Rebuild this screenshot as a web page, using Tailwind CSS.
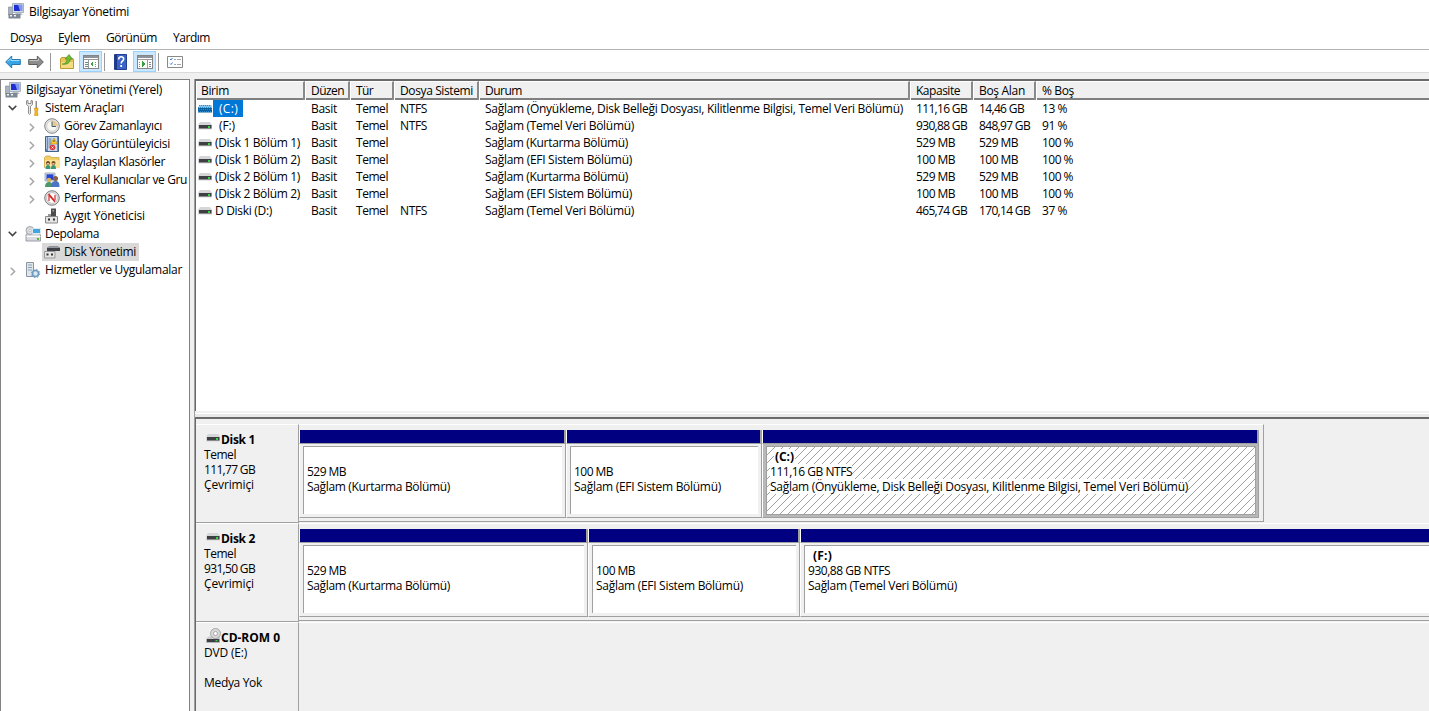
<!DOCTYPE html>
<html lang="tr">

<head>
    <meta charset="utf-8" />
    <meta name="viewport" content="width=device-width, initial-scale=1" />
    <title>Bilgisayar Yönetimi</title>
    <script src="https://cdn.jsdelivr.net/npm/@tailwindcss/browser@4"></script>
</head>

<body class="h-[711px] w-[1429px] overflow-hidden bg-white font-['Open_Sans','Noto_Sans',sans-serif] text-[12px] leading-[18px] text-black whitespace-nowrap">
    <!-- Icon sprites -->
    <svg class="hidden">
        <symbol id="computer" viewBox="0 0 16 16">
            <path d="M0.5 4h4v8h-4z" fill="#a9b4c0" stroke="#7b8793" stroke-width=".6" />
            <path d="M4.5 0.5h11v9h-11z" fill="#d5dce4" stroke="#8c98a5" stroke-width=".7" />
            <path d="M6 1.8h8.2v6.2H6z" fill="#1d2fd0" />
            <path d="M10 1.8h4.2v6.2h-2.2z" fill="#7f97f2" />
            <path d="M8 10h5l2 2H6z" fill="#b8c0c9" />
            <path d="M0.5 11h12v4.5H.5z" fill="#7d8895" />
            <path d="M2 12h2v1.5H2zM6 12h2v1.5H6z" fill="#f2f4f6" />
        </symbol>
        <symbol id="tools" viewBox="0 0 16 16">
            <path d="M1.500.8v3.700l2 1.800v7.200q1 2 2 0V6.300l2-1.800V.8L6 .5v3H3v-3z" fill="#e6e8ea" stroke="#777" stroke-width=".8" />
            <path d="M10.500 1h1.500v7h-1.500z" fill="#8b8b8b" />
            <path d="M9.500 8H13v2l-.6 1 .6 4.500H9.500l.6-4.500-.6-1z" fill="#f6b51e" stroke="#c88708" stroke-width=".5" />
        </symbol>
        <symbol id="clock" viewBox="0 0 16 16">
            <circle cx="8" cy="8" r="7.300" fill="#e7e7e5" stroke="#808488" />
            <circle cx="8" cy="8" r="5.300" fill="#f8f8f2" stroke="#b5babf" stroke-width=".6" />
            <path d="M8 2.700A5.300 5.300 0 0 1 13.300 8H8z" fill="#e8c98d" />
            <path d="M8 3.500V8.500h4" fill="none" stroke="#446078" />
        </symbol>
        <symbol id="events" viewBox="0 0 16 16">
            <path d="M1.500.5h13v15h-13z" fill="#628cc4" stroke="#446490" />
            <path d="M4 1h9v14H4z" fill="#c7dbf2" />
            <path d="M4.500 3h3M4.500 5h3M4.500 7h3M4.500 9h3M4.500 11h3" stroke="#4e6685" stroke-width=".8" />
            <path d="M2 2h1M2 4h1M2 6h1M2 8h1M2 10h1M2 12h1" stroke="#fff" />
            <path d="M10 2l3.500 6h-7z" fill="#ffcf27" stroke="#a87b10" stroke-width=".5" />
            <path d="M10 4v2" stroke="#222" stroke-width=".8" />
            <circle cx="8.500" cy="11.500" r="2.800" fill="#d93a3a" />
            <path d="M7.500 10.500l2 2M9.500 10.500l-2 2" stroke="#fff" stroke-width=".8" />
        </symbol>
        <symbol id="shared" viewBox="0 0 16 16">
            <path d="M.5 3.500L2 2h4l1 1.500h8v10H.5z" fill="#f1cf66" stroke="#c69c31" stroke-width=".7" />
            <path d="M1 6h14v8H1z" fill="#fae394" />
            <path d="M1.500 15c0-3 1-4 2.500-4s2.500 1 2.500 4zM7 15c0-3 1-4 2.500-4s2.500 1 2.500 4z" fill="#39967c" />
            <circle cx="4" cy="9" r="2" fill="#6c4728" />
            <circle cx="9.500" cy="9" r="2" fill="#7a4b25" />
            <path d="M3 9h2v1.500H3zM8.500 9h2v1.500h-2z" fill="#efc59b" />
        </symbol>
        <symbol id="users" viewBox="0 0 16 16">
            <path d="M1 1h10v8H1z" fill="#d5dce4" stroke="#8c98a5" stroke-width=".7" />
            <path d="M2.500 2.300h7v5.500h-7z" fill="#2744d3" />
            <circle cx="5" cy="8" r="2.200" fill="#d9b45b" />
            <path d="M1 15c0-3.500 1.500-5 4-5s4 1.500 4 5z" fill="#4c986d" />
            <circle cx="11.500" cy="6.500" r="2.500" fill="#876043" />
            <path d="M7 15c0-4 1.500-6 4.500-6s4 2 4 6z" fill="#4a75c4" />
        </symbol>
        <symbol id="perf" viewBox="0 0 16 16">
            <circle cx="8" cy="8" r="7.300" fill="#dedede" stroke="#7d7d7d" />
            <circle cx="8" cy="8" r="5.300" fill="#fff" stroke="#aaa" stroke-width=".6" />
            <path d="M5 11V6M11 10V5" fill="none" stroke="#cf2b2b" stroke-width="1.200" />
            <path d="M4.500 4.200l6.500 7.500" stroke="#cf2b2b" stroke-width="1.800" />
        </symbol>
        <symbol id="device" viewBox="0 0 16 16">
            <path d="M7 .5h5V8H7z" fill="#4d4d4d" />
            <path d="M8.500 2H10v1.500H8.500z" fill="#aaa" />
            <path d="M4 6h3v3H4z" fill="#999" />
            <path d="M1.500 8.500h12v6.500h-12z" fill="#e4e4e4" stroke="#888" />
            <path d="M4 10.500h2v2H4zM9 10.500h2v2H9z" fill="#333" />
        </symbol>
        <symbol id="storage" viewBox="0 0 16 16">
            <path d="M1 9l1.500-2h11L15.500 9v6H1z" fill="#d7dade" stroke="#858b92" stroke-width=".8" />
            <path d="M1.500 10.500h14" stroke="#fff" />
            <circle cx="5" cy="4.500" r="4" fill="#d9dde1" stroke="#8f9499" stroke-width=".8" />
            <circle cx="5" cy="4.500" r="1.200" fill="#fff" stroke="#999" stroke-width=".5" />
            <path d="M7.500 2.500h8v5h-8z" fill="#42a5df" stroke="#dce8ef" />
            <path d="M12 12h2v2h-2z" fill="#63b043" />
        </symbol>
        <symbol id="diskmgmt" viewBox="0 0 16 16">
            <path d="M3 4l2-1.500h9L16 4v3H3z" fill="#3e4246" />
            <path d="M3 4l2-1.500h9L16 4z" fill="#979b9f" />
            <path d="M.5 7.500h10.500V14H.5z" fill="#e4e4e4" stroke="#999" />
            <path d="M2.500 9.500h2v2h-2zM7 9.500h2v2H7z" fill="#333" />
        </symbol>
        <symbol id="services" viewBox="0 0 16 16">
            <path d="M1.500.5h7v14h-7z" fill="#e0e6eb" stroke="#8997a4" />
            <path d="M3 3h4M3 5.500h4M3 8h4" stroke="#8ba0b3" />
            <circle cx="10.500" cy="11.500" r="3" fill="#dbe8f2" stroke="#6c9bbd" stroke-width="1.600" />
            <circle cx="10.500" cy="11.500" r="4.200" fill="none" stroke="#6c9bbd" stroke-dasharray="1.600 1.700" />
        </symbol>
        <symbol id="drive" viewBox="0 0 14 8">
            <path d="M2 0h10l2 3H0z" fill="#d4d6d7" />
            <path d="M0 3h14v4.500H0z" fill="#d6d7d8" />
            <path d="M1 3h12.500v3.500H1z" fill="#3d3f42" />
            <path d="M10 4h2v2h-2z" fill="#32d843" />
        </symbol>
        <symbol id="drive-selected" viewBox="0 0 14 8">
            <path d="M1.500 0h12L14 3H0z" fill="#8fc3e8" />
            <path d="M0 3h14v4.500H0z" fill="#0b5f9c" />
            <path d="M1 .5h12M0 2.500h14M1 4.500h13M0 6.500h14" stroke="#2a8bd2" stroke-dasharray="1 1" />
        </symbol>
        <symbol id="cdrom" viewBox="0 0 15 16">
            <path d="M2.500 8.500h11L14 11H0z" fill="#c9cbcc" />
            <path d="M0 10.500h14V15H0z" fill="#cfd0d0" />
            <path d="M.8 11h12.500v3.200H.8z" fill="#3d3f42" />
            <path d="M9.500 12h2v1.300h-2z" fill="#32d843" />
            <circle cx="9.500" cy="5.500" r="5" fill="#d8d8d8" stroke="#9b9b9b" stroke-width=".8" />
            <circle cx="9.500" cy="5.500" r="2" fill="#fff" stroke="#999" stroke-width=".8" />
        </symbol>
        <symbol id="open" viewBox="0 0 9 6">
            <path d="M.7.8l3.800 3.800L8.300.8" fill="none" stroke="#404040" stroke-width="1.500" />
        </symbol>
        <symbol id="closed" viewBox="0 0 6 9">
            <path d="M.8.7l3.800 3.800L.8 8.300" fill="none" stroke="#a6a6a6" stroke-width="1.500" />
        </symbol>
    </svg>

    <div class="flex h-full flex-col">
        <header class="flex h-6 items-center pl-2">
            <svg class="mb-0.5 size-4"><use href="#computer" /></svg>
            <span class="ml-[5px]" data-w="100">Bilgisayar Yönetimi</span>
        </header>

        <nav class="flex h-[26px] items-center border-b border-[#b4b4b4] pt-0.5 pl-2.5">
            <span class="w-12" data-w="32">Dosya</span>
            <span class="w-12" data-w="32">Eylem</span>
            <span class="w-[67px]" data-w="51">Görünüm</span>
            <span data-w="37">Yardım</span>
        </nav>

        <!-- Toolbar -->
        <div class="flex h-[23px] items-center border-b border-[#dadada] pt-px pl-[5px]">
            <svg class="h-[14px] w-4" viewBox="0 0 16 14"><path d="M.7 7l6-6v3.500h8.600v5H6.700V13z" fill="#35a5e5" stroke="#2677b0" /><path d="M2.500 6.500l3.500-3V5.500h8.500" fill="none" stroke="#9fdcfb" /></svg>
            <svg class="ml-[7px] h-[14px] w-4" viewBox="0 0 16 14"><path d="M15.300 7l-6-6v3.500H.7v5h8.600V13z" fill="#8d8d8d" stroke="#5e5e5e" /><path d="M1.500 5.500h9v-2" fill="none" stroke="#c2c2c2" /></svg>
            <div class="ml-1.5 h-[18px] w-px bg-[#999]"></div>
            <svg class="ml-2 size-4" viewBox="0 0 16 16"><path d="M1.500 5l1-1.500h4L8 5h6.500v9.500h-13z" fill="#e8c555" stroke="#c29a33" /><path d="M2 8h12v6H2z" fill="#f5dc83" /><path d="M3 10c3 0 5-1.500 5-5H6l4-4.500L13.500 5h-2.300c0 4-3.200 6-8.200 5z" fill="#6cbd35" stroke="#3e8a1a" stroke-width=".6" /></svg>
            <div class="ml-1 flex h-[21px] w-[23px] items-center justify-center border border-[#99d1ff] bg-[#cce8ff]">
                <svg class="h-[14px] w-4" viewBox="0 0 16 14" shape-rendering="crispEdges"><path d="M.5.5h15v13H.5z" fill="#fff" stroke="#858585" /><path d="M1 1h14v2H1z" fill="#8d939a" /><path d="M1 4.500h14M5.500 5v8" stroke="#999" /><path d="M2 7h3M2 9h3M2 11h3" stroke="#7c8791" /><path d="M6 5h5v8H6z" fill="#fff" /><path d="M10 6v6L7 9z" fill="#36a13b" /><path d="M12.500 6.500v1M12.500 8.500v1M12.500 10.500v1" stroke="#888" /></svg>
            </div>
            <div class="ml-0.5 h-[18px] w-px bg-[#999]"></div>
            <svg class="ml-[9px] h-4 w-[13px]" viewBox="0 0 13 16"><path d="M.5.5h12v15H.5z" fill="#3a62c7" stroke="#223f91" /><path d="M1 1h2v14H1z" fill="#1f3885" /><path d="M4.700 5.500c0-3.500 5-3.500 5-.5 0 2-2.500 2-2.500 4.500" fill="none" stroke="#fff" stroke-width="1.600" /><path d="M6.300 11h1.800v2H6.300z" fill="#fff" /></svg>
            <div class="ml-[6px] flex h-[21px] w-[23px] items-center justify-center border border-[#99d1ff] bg-[#cce8ff]">
                <svg class="h-[14px] w-4" viewBox="0 0 16 14" shape-rendering="crispEdges"><path d="M.5.5h15v13H.5z" fill="#fff" stroke="#858585" /><path d="M1 1h14v2H1z" fill="#8d939a" /><path d="M1 4.500h14M10.500 5v8" stroke="#999" /><path d="M12 7h2M12 9h2M12 11h2" stroke="#7c8791" /><path d="M5 6v6L8 9z" fill="#36a13b" /><path d="M2.500 6.500v1M2.500 8.500v1M2.500 10.500v1" stroke="#888" /></svg>
            </div>
            <div class="ml-[2px] h-[18px] w-px bg-[#999]"></div>
            <svg class="ml-2 h-3 w-4" viewBox="0 0 16 12"><path d="M.5.500h15v11H.500z" fill="#fff" stroke="#888" /><path d="M3 3l1 1 1.500-2M3 7.500l1 1 1.500-2" fill="none" stroke="#3e7ed0" /><path d="M7 3.500h2m1 0h4M7 8.500h2m1 0h4" stroke="#9aa5b0" /></svg>
        </div>

        <main class="flex min-h-0 flex-1 bg-[#f0f0f0] pt-1.5">
            <!-- Console tree -->
            <aside class="w-[190px] overflow-hidden border border-b-0 border-[#828282] bg-white pt-px">
                <div id="tree"></div>
            </aside>

            <section class="ml-1 flex min-w-0 flex-1 flex-col border-l border-[#a0a0a0]">
                <div class="h-[332px] border-t-2 border-l border-[#696969] bg-white">
                    <div id="volume-head" class="grid h-[19px] grid-cols-[109px_45px_44px_85px_431px_63px_63px_1fr] border-b-2 border-[#808080] bg-[#f0f0f0]"></div>
                    <div id="volumes"></div>
                </div>
                <div class="h-[6px] border-t-2 border-[#f0f0f0] bg-[#e8e8e8]"><div class="h-px bg-white"></div></div>
                <div id="disks" class="min-h-0 flex-1 border-t-2 border-l border-[#696969] pt-[5px]"></div>
            </section>
        </main>
    </div>

    <script>
        const tree = [
            { text: "Bilgisayar Yönetimi (Yerel)", icon: "computer", pad: "pl-1", w: 136 },
            { text: "Sistem Araçları", icon: "tools", pad: "pl-[7px]", arrow: "open", w: 79 },
            { text: "Görev Zamanlayıcı", icon: "clock", pad: "pl-[26px]", arrow: "closed", w: 98 },
            { text: "Olay Görüntüleyicisi", icon: "events", pad: "pl-[26px]", arrow: "closed", w: 106 },
            { text: "Paylaşılan Klasörler", icon: "shared", pad: "pl-[26px]", arrow: "closed", w: 101 },
            { text: "Yerel Kullanıcılar ve Gru", icon: "users", pad: "pl-[26px]", arrow: "closed", w: 123 },
            { text: "Performans", icon: "perf", pad: "pl-[26px]", arrow: "closed", w: 61 },
            { text: "Aygıt Yöneticisi", icon: "device", pad: "pl-[26px]", arrow: "none", w: 81 },
            { text: "Depolama", icon: "storage", pad: "pl-[7px]", arrow: "open", w: 54 },
            { text: "Disk Yönetimi", icon: "diskmgmt", pad: "pl-[26px]", arrow: "none", w: 72, selected: true },
            { text: "Hizmetler ve Uygulamalar", icon: "services", pad: "pl-[7px]", arrow: "closed", w: 137 },
        ];

        const arrows = {
            open: `<span class="w-[17px] shrink-0"><svg class="h-1.5 w-[9px]"><use href="#open" /></svg></span>`,
            closed: `<span class="w-[17px] shrink-0 pl-0.5"><svg class="mt-0.5 h-[9px] w-1.5"><use href="#closed" /></svg></span>`,
            none: `<span class="w-[17px] shrink-0"></span>`,
        };

        const heads = [["Birim", 28], ["Düzen", 33], ["Tür", 17], ["Dosya Sistemi", 73], ["Durum", 37], ["Kapasite", 44], ["Boş Alan", 46], ["% Boş", 32]];

        const long = "Sağlam (Önyükleme, Disk Belleği Dosyası, Kilitlenme Bilgisi, Temel Veri Bölümü)";
        const widths = { [long]: 418, "Sağlam (Temel Veri Bölümü)": 149, "Sağlam (Kurtarma Bölümü)": 143, "Sağlam (EFI Sistem Bölümü)": 147 };
        const volumes = [
            ["(C:)", 19, "NTFS", long, "111,16 GB", 51, "14,46 GB", 45, "13 %", 25],
            ["(F:)", 16, "NTFS", "Sağlam (Temel Veri Bölümü)", "930,88 GB", 51, "848,97 GB", 51, "91 %", 25],
            ["(Disk 1 Bölüm 1)", 85, "", "Sağlam (Kurtarma Bölümü)", "529 MB", 39, "529 MB", 39, "100 %", 31],
            ["(Disk 1 Bölüm 2)", 85, "", "Sağlam (EFI Sistem Bölümü)", "100 MB", 39, "100 MB", 39, "100 %", 31],
            ["(Disk 2 Bölüm 1)", 85, "", "Sağlam (Kurtarma Bölümü)", "529 MB", 39, "529 MB", 39, "100 %", 31],
            ["(Disk 2 Bölüm 2)", 85, "", "Sağlam (EFI Sistem Bölümü)", "100 MB", 39, "100 MB", 39, "100 %", 31],
            ["D Diski (D:)", 57, "NTFS", "Sağlam (Temel Veri Bölümü)", "465,74 GB", 51, "170,14 GB", 51, "37 %", 25],
        ];

        const disks = [
            {
                name: "Disk 1", nameW: 34, icon: "drive", lines: [["Temel", 32], ["111,77 GB", 51], ["Çevrimiçi", 50]], width: "w-[965px]",
                parts: [
                    { width: 267, title: "", size: "529 MB", sizeW: 39, status: "Sağlam (Kurtarma Bölümü)" },
                    { width: 196, title: "", size: "100 MB", sizeW: 39, status: "Sağlam (EFI Sistem Bölümü)" },
                    { width: 497, title: "(C:)", size: "111,16 GB NTFS", sizeW: 82, status: long, selected: true },
                ]
            },
            {
                name: "Disk 2", nameW: 34, icon: "drive", lines: [["Temel", 32], ["931,50 GB", 51], ["Çevrimiçi", 50]], width: "w-[1200px]",
                parts: [
                    { width: 289, title: "", size: "529 MB", sizeW: 39, status: "Sağlam (Kurtarma Bölümü)" },
                    { width: 212, title: "", size: "100 MB", sizeW: 39, status: "Sağlam (EFI Sistem Bölümü)" },
                    { width: 690, title: "(F:)", size: "930,88 GB NTFS", sizeW: 82, status: "Sağlam (Temel Veri Bölümü)" },
                ]
            },
            { name: "CD-ROM 0", nameW: 59, icon: "cdrom", lines: [["DVD (E:)", 43], ["&nbsp;", 0], ["Medya Yok", 58]], parts: [] },
        ];

        const label = (text, w, cls = "") => `<span class="${cls}" data-w="${w}">${text}</span>`;

        document.getElementById("tree").innerHTML = tree.map(n => `
            <div class="flex h-[18px] items-center ${n.pad}">
                ${n.arrow ? arrows[n.arrow] : ""}
                <div class="flex h-[18px] items-center ${n.selected ? "-ml-0.5 bg-[#d9d9d9] pr-[3px] pl-0.5" : ""}">
                    <svg class="size-4 shrink-0"><use href="#${n.icon}" /></svg>
                    ${label(n.text, n.w, n.arrow ? "ml-1" : "ml-[5px]")}
                </div>
            </div>`).join("");

        document.getElementById("volume-head").innerHTML = heads.map(([text, w], i) => `
            <div class="border-t border-l border-white leading-[18px] ${i === 0 ? "pl-1" : "pl-[5px]"} ${i < 7 ? "border-r-2 border-r-[#8a8a8a]" : ""}">${label(text, w)}</div>`).join("");

        document.getElementById("volumes").innerHTML = volumes.map((v, i) => `
            <div class="grid h-[17px] grid-cols-[109px_45px_44px_85px_431px_63px_63px_1fr] leading-[17px]">
                <div class="flex items-center pl-0.5">
                    <svg class="h-2 w-[14px] shrink-0"><use href="${i === 0 ? "#drive-selected" : "#drive"}" /></svg>
                    <div class="${i === 0 ? "ml-px h-[17px] w-[30px] bg-[#0078d7] pl-[6px] text-white" : i === 1 ? "ml-[7px]" : "ml-[3px]"}">${label(v[0], v[1])}</div>
                </div>
                <div class="pl-[6px]">${label("Basit", 26)}</div>
                <div class="pl-[6px]">${label("Temel", 32)}</div>
                <div class="pl-[6px]">${v[2] ? label(v[2], 27) : ""}</div>
                <div class="pl-[6px]">${label(v[3], widths[v[3]])}</div>
                <div class="pl-[6px]">${label(v[4], v[5])}</div>
                <div class="pl-[6px]">${label(v[6], v[7])}</div>
                <div class="pl-[6px]">${label(v[8], v[9])}</div>
            </div>`).join("");

        // Diagonal hatch behind the selected partition
        const hatch = `
            <svg class="absolute inset-0 size-full" shape-rendering="crispEdges">
                <pattern id="hatch" width="8" height="8" patternUnits="userSpaceOnUse">
                    <path d="M0 7h1v1H0zM1 6h1v1H1zM2 5h1v1H2zM3 4h1v1H3zM4 3h1v1H4zM5 2h1v1H5zM6 1h1v1H6zM7 0h1v1H7z" fill="#a0a0a0" />
                </pattern>
                <rect width="100%" height="100%" fill="url(#hatch)" />
            </svg>`;

        const part = p => `
            <div class="shrink-0" style="width:${p.width}px">
                <div class="h-[13px] border-r-2 border-l border-r-[#a0a0a0] border-l-white bg-[#000080]"></div>
                <div class="h-[75px] border-y border-r border-l border-[#a0a0a0] border-l-white pt-0.5 ${p.selected ? "bg-[#b8b8b8] pr-0.5 pb-0.5 pl-[3px]" : "bg-[#f0f0f0] pr-[3px] pb-[3px] pl-[3px]"}">
                    <div class="relative h-full border-t border-l border-[#a0a0a0] bg-white pl-[3px] leading-[15px] ${p.selected ? "border-r border-b" : ""}">
                        ${p.selected ? hatch : ""}
                        <div class="relative pt-0.5">
                            <div class="h-[15px] pl-1 font-bold">${p.title ? label(p.title, 19, "inline-block h-[15px] bg-white px-px") : ""}</div>
                            <div class="h-[15px]">${label(p.size, p.sizeW, p.selected ? "inline-block h-[15px] bg-white" : "")}</div>
                            <div class="h-[15px]">${label(p.status, widths[p.status], p.selected ? "inline-block h-[15px] bg-white" : "")}</div>
                        </div>
                    </div>
                </div>
            </div>`;

        document.getElementById("disks").innerHTML = disks.map(d => `
            <div class="flex h-[99px]">
                <div class="h-[99px] w-[103px] shrink-0 border-t border-r border-b border-t-white border-r-[#a0a0a0] border-b-[#a0a0a0] pt-[7px] pl-2 leading-[15px]">
                    <div class="flex h-[15px] items-center pl-0.5 font-bold">
                        ${d.icon === "drive" ? `<svg class="mb-1 h-2 w-[14px]"><use href="#drive" /></svg>` : `<svg class="mb-1 h-4 w-[15px]"><use href="#cdrom" /></svg>`}
                        ${label(d.name, d.nameW, d.icon === "drive" ? "ml-px" : "")}
                    </div>
                    ${d.lines.map(([text, w]) => `<div class="h-[15px]">${label(text, w)}</div>`).join("")}
                </div>
                ${d.parts.length ? `
                <div class="h-[98px] shrink-0 ${d.width} border-t border-r border-b border-t-white border-r-[#a0a0a0] border-b-[#a0a0a0] pt-[5px]">
                    <div class="flex">${d.parts.map(part).join("")}</div>
                </div>` : `<div class="flex-1 border-t border-white"></div>`}
            </div>`).join("");

        function fitLabels() {
            document.querySelectorAll("[data-w]").forEach(el => {
                const target = Number(el.dataset.w);
                if (!target) return;
                el.style.letterSpacing = "0px";
                const range = document.createRange();
                range.selectNodeContents(el);
                el.style.letterSpacing = `${(target - range.getBoundingClientRect().width) / el.textContent.length}px`;
            });
        }

        fitLabels();
        window.addEventListener("load", fitLabels);
        document.fonts.ready.then(fitLabels);
    </script>
</body>

</html>
